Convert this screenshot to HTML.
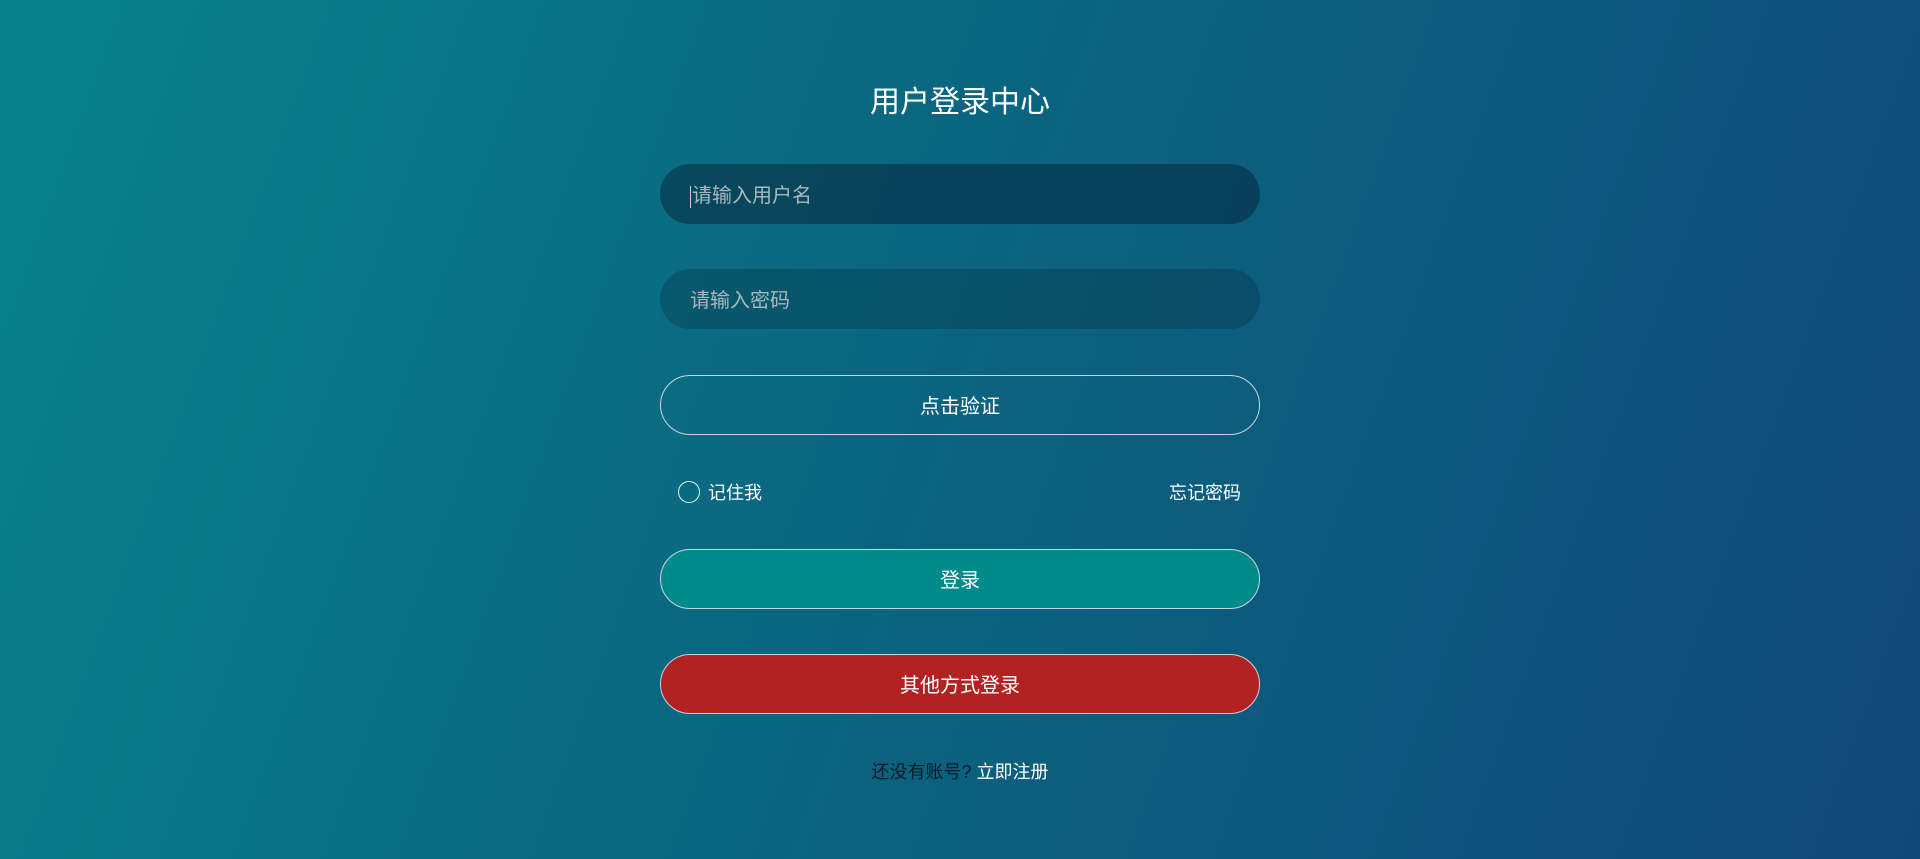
<!DOCTYPE html>
<html><head><meta charset="utf-8"><style>
html,body{margin:0;padding:0;width:1920px;height:859px;overflow:hidden}
body{background:linear-gradient(110deg,#07838c 0%,#0a6680 45%,#11487a 100%);font-family:"Liberation Sans","Noto Sans CJK SC",sans-serif;position:relative}
.t{position:absolute;left:0;width:1920px;top:83px;text-align:center;color:#fff;font-size:30px;line-height:40px}
.box{position:absolute;left:660px;width:600px;height:60px;border-radius:30px;box-sizing:border-box;font-size:20px;line-height:64px}
.in{padding-left:30px;color:#a9b8be}
.i1{top:164px;background:rgba(5,40,60,.55)}
.i2{top:269px;background:rgba(5,40,60,.3)}
.btn{text-align:center;color:#fff;border:1px solid #c8d4da;line-height:62px}
.b1{top:375px}
.b2{top:549px;background:#008b8b}
.b3{top:654px;background:#b22222}
.row{position:absolute;top:479px;font-size:18px;color:#fff;line-height:28px}
.c{position:absolute;left:678px;top:481px;width:20px;height:20px;border:1px solid #dfe;border-radius:50%}
.reg{position:absolute;left:0;width:1920px;top:758px;text-align:center;font-size:18px;line-height:28px;color:#0a1c28}
.caret{display:inline-block;width:1px;height:22px;background:#ccc;vertical-align:middle;margin-right:1px}
</style></head><body>
<div class="t">用户登录中心</div>
<div class="box in i1"><span class="caret"></span>请输入用户名</div>
<div class="box in i2">请输入密码</div>
<div class="box btn b1">点击验证</div>
<div class="c"></div>
<div class="row" style="left:708px">记住我</div>
<div class="row" style="left:1169px">忘记密码</div>
<div class="box btn b2">登录</div>
<div class="box btn b3">其他方式登录</div>
<div class="reg">还没有账号? <span style="color:#fff">立即注册</span></div>
</body></html>
